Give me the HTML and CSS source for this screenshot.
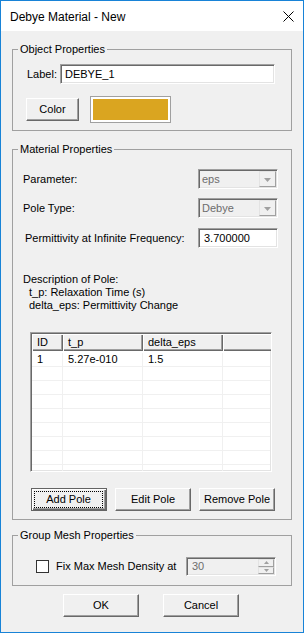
FILE: index.html
```html
<!DOCTYPE html>
<html>
	<head>
		<title>Debye Material - New</title>
		<link rel="stylesheet" href="styles.css">
	</head>
	<body>
		<div class="window">
			<div class="titlebar">
				<span class="title">Debye Material - New</span>
				<svg class="close" width="11" height="11" viewBox="0 0 11 11"><path d="M0.5 0.5 L10.5 10.5 M10.5 0.5 L0.5 10.5" stroke="#000" stroke-width="1" fill="none"/></svg>
			</div>
			<form class="dialog">
				<fieldset class="group">
					<legend>Object Properties</legend>
					<div class="group-body object-body">
						<div class="row">
							<label class="label-short" for="label">Label:</label>
							<input class="edit edit-label" id="label" type="text" value="DEBYE_1">
						</div>
						<div class="row row-color">
							<button type="button" class="btn btn-color">Color</button>
							<span class="swatch"><span class="swatch-fill"></span></span>
						</div>
					</div>
				</fieldset>

				<fieldset class="group group-material">
					<legend>Material Properties</legend>
					<div class="group-body material-body">
						<div class="prop-row">
							<span>Parameter:</span>
							<span class="combo"><span>eps</span><span class="drop"><svg width="7" height="4" viewBox="0 0 7 4"><polygon points="0,0 7,0 3.5,4" fill="#a0a0a0"/></svg></span></span>
						</div>
						<div class="prop-row prop-pole">
							<span>Pole Type:</span>
							<span class="combo"><span>Debye</span><span class="drop"><svg width="7" height="4" viewBox="0 0 7 4"><polygon points="0,0 7,0 3.5,4" fill="#a0a0a0"/></svg></span></span>
						</div>
						<div class="prop-row prop-perm">
							<label class="perm-label" for="perm">Permittivity at Infinite Frequency:</label>
							<input class="edit edit-perm" id="perm" type="text" value="3.700000">
						</div>
						<div class="desc">
							<div>Description of Pole:</div>
							<div class="desc-sub">t_p: Relaxation Time (s)</div>
							<div class="desc-sub">delta_eps: Permittivity Change</div>
						</div>
						<div class="listview">
							<div class="lv-head">
								<span class="lv-cell col-id">ID</span>
								<span class="lv-cell col-tp">t_p</span>
								<span class="lv-cell col-de">delta_eps</span>
								<span class="lv-cell col-fill"></span>
							</div>
							<div class="lv-body">
								<div class="lv-row"><span class="col-id">1</span><span class="col-tp">5.27e-010</span><span class="col-de">1.5</span><span class="col-fill"></span></div>
								<div class="lv-row"><span class="col-id"></span><span class="col-tp"></span><span class="col-de"></span><span class="col-fill"></span></div>
								<div class="lv-row"><span class="col-id"></span><span class="col-tp"></span><span class="col-de"></span><span class="col-fill"></span></div>
								<div class="lv-row"><span class="col-id"></span><span class="col-tp"></span><span class="col-de"></span><span class="col-fill"></span></div>
								<div class="lv-row"><span class="col-id"></span><span class="col-tp"></span><span class="col-de"></span><span class="col-fill"></span></div>
								<div class="lv-row"><span class="col-id"></span><span class="col-tp"></span><span class="col-de"></span><span class="col-fill"></span></div>
								<div class="lv-row"><span class="col-id"></span><span class="col-tp"></span><span class="col-de"></span><span class="col-fill"></span></div>
								<div class="lv-row"><span class="col-id"></span><span class="col-tp"></span><span class="col-de"></span><span class="col-fill"></span></div>
								<div class="lv-row"><span class="col-id"></span><span class="col-tp"></span><span class="col-de"></span><span class="col-fill"></span></div>
							</div>
						</div>
						<div class="pole-buttons">
							<button type="button" class="btn btn-default"><span class="focus">Add Pole</span></button>
							<button type="button" class="btn">Edit Pole</button>
							<button type="button" class="btn">Remove Pole</button>
						</div>
					</div>
				</fieldset>

				<fieldset class="group group-mesh">
					<legend>Group Mesh Properties</legend>
					<div class="group-body mesh-body">
						<span class="check"></span>
						<span class="mesh-label">Fix Max Mesh Density at</span>
						<span class="spin">
							<span>30</span>
							<span class="spin-buttons">
								<span class="spin-btn"><svg width="5" height="3" viewBox="0 0 5 3"><polygon points="2.5,0 5,3 0,3" fill="#a0a0a0"/></svg></span>
								<span class="spin-btn"><svg width="5" height="3" viewBox="0 0 5 3"><polygon points="0,0 5,0 2.5,3" fill="#a0a0a0"/></svg></span>
							</span>
						</span>
					</div>
				</fieldset>

				<div class="footer">
					<button type="button" class="btn">OK</button>
					<button type="button" class="btn">Cancel</button>
				</div>
			</form>
		</div>
	</body>
</html>
```

FILE: styles.css
```css
body {
	margin: 0;
	font-family: "Liberation Sans", Arial, sans-serif;
	font-size: 11px;
	line-height: 13px;
	color: #000;
}
.window {
	width: 304px;
	height: 633px;
	box-sizing: border-box;
	border: 1px solid #1883d7;
	background: #f0f0f0;
}
.titlebar {
	display: flex;
	align-items: center;
	justify-content: space-between;
	height: 30px;
	padding: 0 9px;
	background: #fff;
	font-size: 12px;
	line-height: 14px;
}
.title {
	margin-top: 2px;
}
.close {
	display: block;
}

.dialog {
	padding: 12px 11px 0;
}

/* group boxes */
.group {
	margin: 0;
	padding: 0;
	min-width: 0;
	border: 1px solid #a0a0a0;
}
.group legend {
	margin-left: 5px;
	padding: 0 2px;
	line-height: 13px;
}
.group-material {
	margin-top: 12px;
}
.group-mesh {
	margin-top: 9px;
}

.row {
	display: flex;
	align-items: center;
}
.object-body {
	padding: 8px 0 7px 13px;
}
.label-short {
	box-sizing: border-box;
	width: 34px;
	padding-left: 1px;
}
.row-color {
	margin-top: 12px;
}

/* controls */
.edit {
	box-sizing: border-box;
	height: 20px;
	margin: 0;
	padding: 0 4px;
	border: 1px solid;
	border-color: #a0a0a0 #fff #fff #a0a0a0;
	box-shadow: inset 1px 1px #696969, inset -1px -1px #e3e3e3;
	background: #fff;
	font: inherit;
	color: #000;
	outline: none;
}
.edit-label {
	width: 215px;
}
.edit-perm {
	width: 80px;
	padding-left: 5px;
}

.btn {
	box-sizing: border-box;
	width: 76px;
	height: 23px;
	margin: 0;
	padding: 0;
	border: 1px solid;
	border-color: #fff #696969 #696969 #fff;
	box-shadow: inset -1px -1px #a0a0a0;
	background: #f0f0f0;
	font: inherit;
	color: #000;
}
.btn-color {
	width: 53px;
}
.btn-default {
	display: flex;
	padding: 2px 3px 2px 2px;
	border-color: #646464;
	box-shadow: inset 1px 1px #fff, inset -1px -1px #696969, inset -2px -2px #a0a0a0;
}
.btn-default .focus {
	flex: 1;
	display: flex;
	align-items: center;
	justify-content: center;
	border: 1px dotted #000;
}

.swatch {
	box-sizing: border-box;
	width: 81px;
	height: 27px;
	margin-left: 11px;
	padding: 2px;
	border: 1px solid #a0a0a0;
	background: #fff;
}
.swatch-fill {
	display: block;
	height: 100%;
	background: #daa520;
}

/* material properties */
.material-body {
	padding: 13px 0 8px 10px;
}
.prop-row {
	display: flex;
	align-items: center;
	justify-content: space-between;
	padding-right: 13px;
}
.prop-pole {
	margin-top: 9px;
}
.prop-perm {
	margin-top: 10px;
}
.perm-label {
	padding-left: 2px;
}
.combo {
	box-sizing: border-box;
	display: flex;
	align-items: center;
	justify-content: space-between;
	width: 80px;
	height: 20px;
	padding: 1px 1px 1px 3px;
	border: 1px solid;
	border-color: #a0a0a0 #fff #fff #a0a0a0;
	box-shadow: inset 1px 1px #696969, inset -1px -1px #e3e3e3;
	background: #f0f0f0;
	color: #6d6d6d;
}
.drop {
	box-sizing: border-box;
	display: flex;
	align-items: center;
	justify-content: center;
	width: 17px;
	height: 16px;
	border: 1px solid;
	border-color: #e3e3e3 #a0a0a0 #a0a0a0 #e3e3e3;
	background: #f0f0f0;
}
.drop svg {
	display: block;
	margin-top: 1px;
}

.desc {
	margin-top: 25px;
}
.desc-sub {
	padding-left: 6px;
}

/* pole list */
.listview {
	box-sizing: border-box;
	width: 242px;
	height: 140px;
	margin: 20px 0 0 7px;
	padding: 1px;
	border: 1px solid;
	border-color: #a0a0a0 #fff #fff #a0a0a0;
	box-shadow: inset 1px 1px #696969, inset -1px -1px #e3e3e3;
	background: #fff;
	overflow: hidden;
}
.lv-head {
	display: flex;
	height: 17px;
}
.lv-cell {
	box-sizing: border-box;
	padding: 2px 0 0 5px;
	background: #f0f0f0;
	box-shadow: inset 1px 1px #fff, inset -1px -1px #696969, inset -2px -2px #a0a0a0;
}
.col-id {
	box-sizing: border-box;
	width: 31px;
	flex: none;
}
.col-tp, .col-de {
	box-sizing: border-box;
	width: 80px;
	flex: none;
}
.col-fill {
	box-sizing: border-box;
	width: 80px;
	flex: none;
}
.lv-body {
	padding-top: 2px;
}
.lv-row {
	display: flex;
	box-sizing: border-box;
	height: 14px;
	border-bottom: 1px solid #f0f0f0;
}
.lv-row span {
	padding-left: 5px;
	border-right: 1px solid #f0f0f0;
}

.pole-buttons {
	display: flex;
	gap: 8px;
	margin: 16px 0 0 8px;
}

/* mesh */
.mesh-body {
	display: flex;
	align-items: center;
	padding: 15px 15px 9px 23px;
}
.check {
	box-sizing: border-box;
	width: 13px;
	height: 13px;
	margin-right: 7px;
	border: 1px solid #333;
	background: #fff;
}
.mesh-label {
	flex: 1;
}
.spin {
	box-sizing: border-box;
	display: flex;
	align-items: center;
	justify-content: space-between;
	width: 90px;
	height: 19px;
	padding: 1px 1px 1px 5px;
	border: 1px solid;
	border-color: #a0a0a0 #fff #fff #a0a0a0;
	box-shadow: inset 1px 1px #696969, inset -1px -1px #e3e3e3;
	background: #f0f0f0;
	color: #6d6d6d;
}
.spin-buttons {
	display: flex;
	flex-direction: column;
	align-self: stretch;
	width: 16px;
}
.spin-btn {
	box-sizing: border-box;
	flex: 1;
	display: flex;
	align-items: center;
	justify-content: center;
	border: 1px solid;
	border-color: #e3e3e3 #a0a0a0 #a0a0a0 #e3e3e3;
	background: #f0f0f0;
}
.spin-btn svg {
	display: block;
}

.footer {
	display: flex;
	gap: 24px;
	margin-top: 8px;
	padding-left: 51px;
}
```
